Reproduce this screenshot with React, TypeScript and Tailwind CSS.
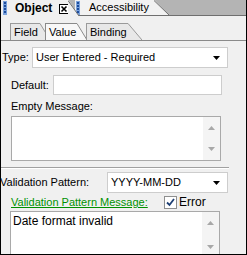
import React from "react";

function Grip() {
    return (
        <svg width="4" height="14" viewBox="0 0 4 14" className="shrink-0">
            <rect x="0" y="0" width="4" height="14" fill="#7aa2dc" />
            {[1, 4, 7, 10].map((y) => (
                <rect key={y} x="1" y={y} width="2" height="2" fill="#1d4c9c" />
            ))}
        </svg>
    );
}

function CloseBox() {
    return (
        <svg width="10" height="10" viewBox="0 0 10 10" className="shrink-0">
            <rect x="0.5" y="0.5" width="9" height="9" fill="#fff" stroke="#000" />
            <path d="M2.5 2.5 L7.5 7.5 M7.5 2.5 L2.5 7.5" stroke="#000" strokeWidth="1.6" />
        </svg>
    );
}

function Slant({ w, h, fill, stroke }: { w: number; h: number; fill: string; stroke: string }) {
    return (
        <svg width={w} height={h} viewBox={`0 0 ${w} ${h}`} className="shrink-0">
            <polygon points={`0,0 0.5,0 ${w},${h} 0,${h}`} fill={fill} />
            <line x1="0" y1="0.5" x2={w} y2={h} stroke={stroke} strokeWidth="1" />
        </svg>
    );
}

function DownArrow({ color = "#000" }: { color?: string }) {
    return (
        <svg width="7" height="4" viewBox="0 0 7 4" className="shrink-0">
            <polygon points="0,0 7,0 3.5,4" fill={color} />
        </svg>
    );
}

function UpArrow({ color = "#a8a8a8" }: { color?: string }) {
    return (
        <svg width="7" height="4" viewBox="0 0 7 4" className="shrink-0">
            <polygon points="0,4 7,4 3.5,0" fill={color} />
        </svg>
    );
}

function Combo({ value, className }: { value: string; className: string }) {
    return (
        <div className={`flex items-center justify-between bg-white border border-[#cdcdcd] pl-[3px] pr-[7px] ${className}`}>
            <span>{value}</span>
            <DownArrow />
        </div>
    );
}

function ScrollBar({ tall }: { tall?: boolean }) {
    return (
        <div className={`flex w-[17px] flex-col items-center bg-[#f4f4f4] pt-[9px] ${tall ? "gap-[20px]" : "justify-between pb-[9px]"}`}>
            <UpArrow />
            <DownArrow color="#a8a8a8" />
        </div>
    );
}

export default function App() {
    return (
        <div className="relative h-[255px] w-[247px] overflow-hidden border-x border-b border-black bg-[#f0f0f0] font-['Liberation_Sans',Arial,sans-serif] text-[11px] leading-[13px] text-black">
            {/* dock tabs */}
            <div className="flex h-[16px] items-start border-b border-[#6f6f6f] bg-[#b4b4b4]">
                <div className="relative z-10 flex h-[16px]">
                    <div className="flex w-[67px] items-center bg-[#f0f0f0] pl-[2px]">
                        <Grip />
                        <span className="ml-[8px] text-[12px] font-bold">Object</span>
                        <span className="ml-[7px] mt-[2px]">
                            <CloseBox />
                        </span>
                    </div>
                    <Slant w={11} h={16} fill="#f0f0f0" stroke="#6f6f6f" />
                </div>
                <div className="-ml-[4px] flex h-[15px]">
                    <div className="flex w-[79px] items-center bg-[#f2f2f2] pl-[1px]">
                        <Grip />
                        <span className="ml-[9px]">Accessibility</span>
                    </div>
                    <Slant w={15} h={15} fill="#f2f2f2" stroke="#6f6f6f" />
                </div>
            </div>

            {/* property tabs */}
            <div className="flex h-[25px] items-end border-b border-[#8a8a8a] pl-[9px] pt-[7px]">
                <div className="flex h-[17px]">
                    <div className="flex w-[30px] items-center border-l border-t border-[#9a9a9a] bg-[#e8e8e8] pl-[3px]">Field</div>
                    <Slant w={10} h={17} fill="#e8e8e8" stroke="#9a9a9a" />
                </div>
                <div className="relative z-10 -ml-[5px] flex h-[17px]">
                    <div className="flex w-[32px] items-center border-l border-t border-[#8a8a8a] bg-[#f8f8f8] pl-[3px]">Value</div>
                    <Slant w={10} h={17} fill="#f8f8f8" stroke="#8a8a8a" />
                </div>
                <div className="-ml-[1px] flex h-[17px]">
                    <div className="flex w-[42px] items-center border-l border-t border-[#9a9a9a] bg-[#e8e8e8] pl-[3px]">Binding</div>
                    <Slant w={14} h={17} fill="#e8e8e8" stroke="#9a9a9a" />
                </div>
            </div>

            {/* Type */}
            <div className="mt-[6px] flex items-center">
                <span className="ml-[1px] w-[30px]">Type:</span>
                <Combo value="User Entered - Required" className="h-[21px] w-[196px]" />
            </div>

            {/* Default */}
            <div className="mt-[7px] flex items-center">
                <span className="ml-[10px] w-[42px]">Default:</span>
                <div className="h-[20px] w-[169px] border border-[#cdcdcd] bg-white" />
            </div>

            {/* Empty Message */}
            <div className="ml-[10px] mt-[5px]">Empty Message:</div>
            <div className="ml-[10px] mt-[3px] flex h-[45px] w-[210px] justify-end border border-[#a9a9a9] bg-white">
                <ScrollBar />
            </div>

            <div className="mt-[6px] w-[228px] border-b border-t border-b-white border-t-[#a0a0a0]" />

            {/* Validation Pattern */}
            <div className="mt-[3px] flex items-center">
                <span className="-ml-[1px] w-[107px]">Validation Pattern:</span>
                <Combo value="YYYY-MM-DD" className="h-[21px] w-[121px]" />
            </div>

            <div className="mt-[3px] flex items-center">
                <span className="ml-[10px] w-[153px] text-[#009100] underline decoration-[#009100]">Validation Pattern Message:</span>
                <span className="flex h-[13px] w-[13px] items-center justify-center border border-[#8e8f8f] bg-white">
                    <svg width="9" height="9" viewBox="0 0 9 9">
                        <path d="M1 4.5 L3.5 7 L8 1" fill="none" stroke="#1e3f74" strokeWidth="1.8" />
                    </svg>
                </span>
                <span className="ml-[2px] text-[12px]">Error</span>
            </div>

            <div className="ml-[9px] mt-[2px] flex h-[50px] w-[210px] border border-[#a9a9a9] bg-white">
                <div className="flex-1 pl-[2px] pt-[3px] text-[12px]">Date format invalid</div>
                <ScrollBar tall />
            </div>
        </div>
    );
}
